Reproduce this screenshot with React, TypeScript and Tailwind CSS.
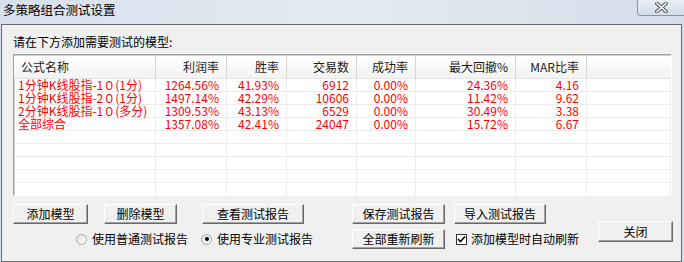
import React from "react";

const FONT = { fontFamily: '"Noto Sans CJK SC", "Noto Sans", sans-serif' };

const cols = ["公式名称", "利润率", "胜率", "交易数", "成功率", "最大回撤%", "MAR比率", ""];
const rows = [
  ["1分钟K线股指-1０(1分)", "1264.56%", "41.93%", "6912", "0.00%", "24.36%", "4.16", ""],
  ["1分钟K线股指-2０(1分)", "1497.14%", "42.29%", "10606", "0.00%", "11.42%", "9.62", ""],
  ["2分钟K线股指-1０(多分)", "1309.53%", "43.13%", "6529", "0.00%", "30.49%", "3.38", ""],
  ["全部综合", "1357.08%", "42.41%", "24047", "0.00%", "15.72%", "6.67", ""],
  ["", "", "", "", "", "", "", ""],
  ["", "", "", "", "", "", "", ""],
  ["", "", "", "", "", "", "", ""],
  ["", "", "", "", "", "", "", ""],
  ["", "", "", "", "", "", "", ""],
];

function Btn({ label, w, h = "h-[20px]" }: { label: string; w: string; h?: string }) {
  return (
    <div
      className={`${w} ${h} flex items-center justify-center bg-[#f0f0f0] border border-t-white border-l-white border-r-[#696969] border-b-[#696969] shadow-[inset_-1px_-1px_0_#a0a0a0] text-[12px] leading-[14px] text-black`}
    >
      {label}
    </div>
  );
}

function Radio({ checked }: { checked?: boolean }) {
  return (
    <div className="w-[11px] h-[11px] rounded-full border border-[#a9a9a9] bg-gradient-to-br from-[#e0e0e0] to-white flex items-center justify-center">
      {checked && <div className="w-[4px] h-[4px] rounded-full bg-black" />}
    </div>
  );
}

export default function App() {
  return (
    <div className="w-[684px] h-[262px] flex flex-col bg-gradient-to-r from-[#d7e1ed] via-[#e3eaf2] to-[#d5dfea] overflow-hidden" style={FONT}>
      <div className="h-[24px] flex items-start relative shrink-0">
        <div className="pl-[3px] pt-[2px] text-[12.5px] leading-[16px] text-black">多策略组合测试设置</div>
        <div className="absolute left-[637px] top-0 w-[49px] h-[16px] rounded-b-[4px] border border-t-0 border-[#8896a8] bg-gradient-to-b from-[#e9eef4] to-[#d3dce7] flex items-center justify-center">
          <svg width="13" height="11" viewBox="0 0 13 11">
            <path d="M2 1.5 L11 9.5 M11 1.5 L2 9.5" stroke="#4a5563" strokeWidth="3.6" strokeLinecap="square" />
            <path d="M2 1.5 L11 9.5 M11 1.5 L2 9.5" stroke="#ffffff" strokeWidth="1.6" strokeLinecap="square" />
          </svg>
        </div>
      </div>
      <div className="ml-[1px] w-[681px] flex-1 border border-[#6b6b6b] bg-[#f0f0f0] pl-[11px] pt-[10px]">
        <div className="h-[14px] text-[12px] leading-[14px] text-black">请在下方添加需要测试的模型:</div>
        <div className="mt-[5px] w-[659px] h-[142px] border border-t-[#a0a0a0] border-l-[#a0a0a0] border-r-white border-b-white bg-white shadow-[inset_1px_1px_0_#cfcfcf] overflow-hidden">
          <div className="grid grid-cols-[142px_71px_60px_70px_59px_100px_71px_1fr]">
            {cols.map((c, i) => (
              <div
                key={"h" + i}
                className={`h-[23px] mt-[1px] bg-gradient-to-b from-white to-[#f3f3f3] border-b border-[#e5e5e5] flex items-center text-[12px] leading-[14px] text-[#1a1a1a] ${
                  i === 0 ? "justify-start pl-[7px]" : "justify-end pr-[7px]"
                } ${i < 7 ? "border-r border-r-[#d5d5d5]" : ""}`}
              >
                {c}
              </div>
            ))}
            {rows.map((r, ri) =>
              r.map((c, ci) => (
                <div
                  key={ri + "-" + ci}
                  className={`h-[13px] border-b border-r border-[#ececec] text-[12px] leading-[12px] text-[#ff0000] whitespace-nowrap flex items-center ${
                    ci === 0 ? "justify-start pl-[4px]" : "justify-end pr-[7px]"
                  }`}
                >
                  {c}
                </div>
              ))
            )}
          </div>
        </div>
        <div className="flex mt-[8px]">
          <div className="w-[339px] flex flex-col">
            <div className="flex">
              <Btn label="添加模型" w="w-[75px]" />
              <div className="ml-[16px]"><Btn label="删除模型" w="w-[73px]" /></div>
              <div className="ml-[25px]"><Btn label="查看测试报告" w="w-[102px]" /></div>
            </div>
            <div className="mt-[5px] h-[20px] flex items-center pl-[63px] text-[12px] leading-[14px] text-black">
              <Radio />
              <span className="ml-[5px]">使用普通测试报告</span>
              <div className="ml-[13px]"><Radio checked /></div>
              <span className="ml-[5px]">使用专业测试报告</span>
            </div>
          </div>
          <div className="w-[246px] flex flex-col">
            <div className="flex">
              <Btn label="保存测试报告" w="w-[93px]" />
              <div className="ml-[9px]"><Btn label="导入测试报告" w="w-[92px]" /></div>
            </div>
            <div className="mt-[5px] flex items-center">
              <Btn label="全部重新刷新" w="w-[93px]" />
              <div className="ml-[11px] w-[11px] h-[11px] border border-[#333] bg-white flex items-center justify-center">
                <svg width="9" height="9" viewBox="0 0 9 9">
                  <path d="M1 4 L3.5 6.5 L8 1.5" stroke="#000" strokeWidth="1.6" fill="none" />
                </svg>
              </div>
              <span className="ml-[4px] text-[12px] leading-[14px] text-black whitespace-nowrap">添加模型时自动刷新</span>
            </div>
          </div>
          <div className="pt-[17px]">
            <Btn label="关闭" w="w-[75px]" h="h-[21px]" />
          </div>
        </div>
      </div>
    </div>
  );
}
